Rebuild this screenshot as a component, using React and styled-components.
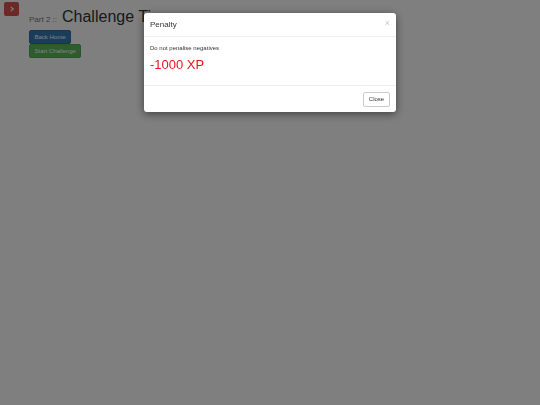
import React from 'react';
import styled, { createGlobalStyle } from 'styled-components';

const GlobalStyle = createGlobalStyle`
  html, body {
    margin: 0;
    padding: 0;
    background: #fff;
    font-family: "Liberation Sans", Arial, sans-serif;
  }
  body {
    width: 540px;
    height: 405px;
    overflow: hidden;
  }
`;

const Page = styled.div`
  display: flex;
  align-items: flex-start;
  gap: 10px;
  padding: 2px 4px;
`;

const MenuButton = styled.button`
  width: 15px;
  height: 14px;
  padding: 0;
  border: none;
  border-radius: 2px;
  background: #d9534f;
  color: #fff;
  display: flex;
  align-items: center;
  justify-content: center;
  svg {
    width: 6px;
    height: 6px;
  }
`;

const Content = styled.div`
  display: flex;
  flex-direction: column;
  align-items: flex-start;
  padding-top: 5px;
`;

const Title = styled.h1`
  margin: 0 0 1px;
  font-weight: 400;
  font-size: 16px;
  line-height: 19px;
  color: #333;
  white-space: nowrap;
`;

const Small = styled.small`
  font-size: 8px;
  color: #777;
  margin-right: 5px;
`;

const ActionButton = styled.button`
  height: 14px;
  padding: 0 4.5px;
  border: 1px solid ${p => p.$border};
  border-radius: 2px;
  background: ${p => p.$bg};
  color: #fff;
  font-family: inherit;
  font-size: 6px;
  line-height: 12px;
`;

const Backdrop = styled.div`
  position: fixed;
  inset: 0;
  background: rgba(0, 0, 0, 0.5);
`;

const Modal = styled.div`
  position: fixed;
  top: 13px;
  left: 144px;
  width: 252px;
  background: #fff;
  border-radius: 3px;
  box-shadow: 0 2px 8px rgba(0, 0, 0, 0.5);
  display: flex;
  flex-direction: column;
`;

const Header = styled.div`
  height: 23px;
  padding: 0 6px;
  display: flex;
  align-items: center;
  justify-content: space-between;
  border-bottom: 1px solid #eee;
`;

const ModalTitle = styled.h4`
  margin: 0;
  font-weight: 400;
  font-size: 8px;
  color: #333;
`;

const CloseX = styled.span`
  font-size: 9px;
  color: #c8c8c8;
  line-height: 1;
  margin-top: -2px;
`;

const Body = styled.div`
  height: 49px;
  padding: 8px 6px 0;
  box-sizing: border-box;
  border-bottom: 1px solid #eee;
`;

const Note = styled.p`
  margin: 0 0 6px;
  font-size: 6px;
  color: #333;
`;

const Penalty = styled.p`
  margin: 0;
  font-size: 13px;
  color: #e0191f;
`;

const Footer = styled.div`
  height: 26px;
  padding: 0 6px;
  display: flex;
  align-items: center;
  justify-content: flex-end;
`;

const FooterButton = styled.button`
  width: 27px;
  height: 15px;
  padding: 0;
  border: 1px solid #ccc;
  border-radius: 2px;
  background: #fff;
  color: #333;
  font-family: inherit;
  font-size: 6px;
`;

const App = () => {
    return (
        <>
            <GlobalStyle/>
            <Page>
                <MenuButton>
                    <svg viewBox="0 0 10 10" fill="none" stroke="#fff" strokeWidth="2">
                        <path d="M3 1.5 L7 5 L3 8.5"/>
                    </svg>
                </MenuButton>
                <Content>
                    <Title><Small>Part 2 ::</Small>Challenge Time</Title>
                    <ActionButton $bg="#337ab7" $border="#2e6da4">Back Home</ActionButton>
                    <ActionButton $bg="#5cb85c" $border="#4cae4c">Start Challenge</ActionButton>
                </Content>
            </Page>
            <Backdrop/>
            <Modal>
                <Header>
                    <ModalTitle>Penalty</ModalTitle>
                    <CloseX>×</CloseX>
                </Header>
                <Body>
                    <Note>Do not penalise negatives</Note>
                    <Penalty>-1000 XP</Penalty>
                </Body>
                <Footer>
                    <FooterButton>Close</FooterButton>
                </Footer>
            </Modal>
        </>
    )
}

export default App;
